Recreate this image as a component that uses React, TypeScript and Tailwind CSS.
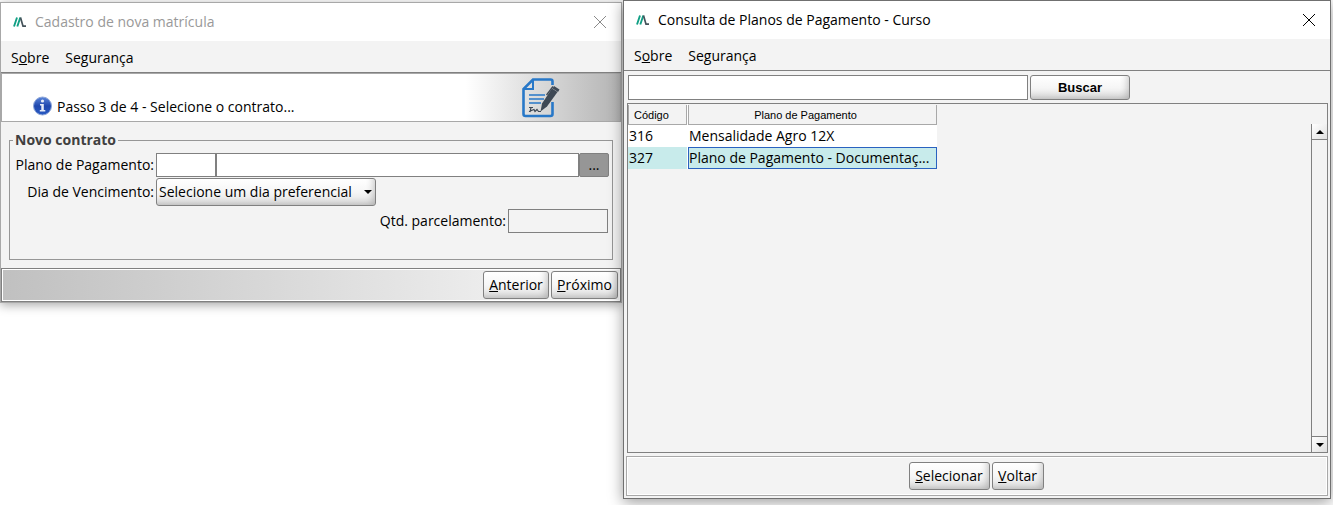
import { useState, type ReactNode } from "react";

interface IPropsWindow {
  title: string;
  active?: boolean;
  className?: string;
  children: ReactNode;
}

const buttonStyle =
  "h-7 rounded-[3px] border border-[#808080] bg-linear-to-b from-white via-[#f6f6f6] to-[#e0e0e0] text-sm text-black shadow-[inset_-5px_-4px_7px_-3px_rgba(0,0,0,0.2)]";

const plans = [
  { code: "316", name: "Mensalidade Agro 12X" },
  { code: "327", name: "Plano de Pagamento - Documentaç..." },
];

function Logo() {
  return (
    <svg className="h-3 w-3.5" viewBox="0 0 14 12" fill="none" aria-hidden="true">
      <path d="M1 10.5 4 1.5M4.3 10.5 7.3 1.5" stroke="#12a085" strokeWidth="1.9" />
      <path d="M7.5 1.5 10 10.2H13" stroke="#44525a" strokeWidth="1.7" />
    </svg>
  );
}

function CloseIcon() {
  return (
    <svg className="h-3 w-3" viewBox="0 0 12 12" fill="none" stroke="currentColor" aria-hidden="true">
      <path d="M0 0 12 12M12 0 0 12" />
    </svg>
  );
}

function InfoIcon() {
  return (
    <svg className="h-5 w-5 shrink-0" viewBox="0 0 20 20" aria-hidden="true">
      <defs>
        <linearGradient id="info" x1="0" y1="0" x2="0" y2="1">
          <stop offset="0" stopColor="#5c86da" />
          <stop offset="0.5" stopColor="#1f47ad" />
          <stop offset="1" stopColor="#2a5bc4" />
        </linearGradient>
      </defs>
      <circle cx="9.5" cy="10" r="9" fill="url(#info)" stroke="#8ea6d8" />
      <circle cx="9.5" cy="5" r="1.6" fill="#e6ecf8" />
      <path d="M7 8H10.8V14H12.3V15.5H6.800V14H8.300V9.400H7Z" fill="#e6ecf8" />
    </svg>
  );
}

function ContractIcon() {
  return (
    <svg className="h-10 w-10 shrink-0" viewBox="0 0 40 40" fill="none" aria-hidden="true">
      <path
        d="M31.5 7V3.5Q31.5 1.5 29.5 1.5H12L2.500 11V36Q2.500 38 4.500 38H29.500Q31.500 38 31.500 36V24"
        stroke="#2878c8"
        strokeWidth="2.6"
      />
      <path d="M12 2V11H3" stroke="#2878c8" strokeWidth="2" />
      <path d="M8 17H24M8 21H23M8 25H20" stroke="#2878c8" strokeWidth="1.6" />
      <path
        d="M8 29.500H12M10 29.500 9 34M8 33.500 13 31.500 14 33.500 16 31.500 17.500 33.500H20"
        stroke="#3f4955"
        strokeWidth="1.2"
      />
      <path d="M31 10.500 36.500 14 26 28.500 19.500 33.500 21 25.500Z" fill="#3f4955" />
      <path d="M33 8 38.500 11.500 37 14 31.500 10.500Z" fill="#3f4955" />
      <path d="M32 8.500 25.500 17" stroke="#3f4955" strokeWidth="1.3" />
    </svg>
  );
}

function Triangle({ up }: { up?: boolean }) {
  return (
    <svg className="h-1.5 w-2.5" viewBox="0 0 10 6" fill="#000" aria-hidden="true">
      <path d={up ? "M1 5 5 1 9 5Z" : "M1 1H9L5 5Z"} />
    </svg>
  );
}

function Window({ title, active, className, children }: IPropsWindow) {
  return (
    <section
      className={`flex min-w-0 flex-col border bg-[#f3f3f3] ${
        active
          ? "border-[#707070] shadow-[0_3px_14px_rgba(0,0,0,0.4)]"
          : "border-[#a8a8a8] shadow-[0_2px_10px_rgba(0,0,0,0.35)]"
      } ${className ?? ""}`}
    >
      <header className="flex h-[38px] items-center bg-white pr-[15px] pl-3">
        <Logo />
        <h1 className={`ml-2 flex-1 text-sm ${active ? "text-black" : "text-[#999999]"}`}>{title}</h1>
        <button aria-label="Fechar" className={active ? "text-black" : "text-[#8a8a8a]"}>
          <CloseIcon />
        </button>
      </header>
      <nav className="flex h-8 items-center gap-4 border-b border-[#808080] px-2.5 pt-0.5 text-sm">
        <button>
          S<u>o</u>bre
        </button>
        <button>Segurança</button>
      </nav>
      {children}
    </section>
  );
}

function RegistrationWindow() {
  return (
    <Window title="Cadastro de nova matrícula" className="mt-0.5 self-start">
      <div className="flex h-[49px] items-center justify-between border border-[#a8a8a8] bg-linear-to-r from-white from-75% to-[#b4b4b4] pr-[59px] pl-[31px]">
        <div className="flex items-center gap-1 pt-4">
          <InfoIcon />
          <p className="pt-0.5 text-sm">Passo 3 de 4 - Selecione o contrato...</p>
        </div>
        <ContractIcon />
      </div>
      <form onSubmit={(e) => e.preventDefault()}>
        <fieldset className="mx-2 my-2 h-[130px] border border-[#969696] px-[3px]">
          <legend className="px-0.5 text-sm leading-5 font-bold text-[#404040]">Novo contrato</legend>
          <div className="mt-[3px] flex items-center">
            <label htmlFor="plan" className="w-[143px] shrink-0 pr-0.5 text-right text-sm whitespace-nowrap">
              Plano de Pagamento:
            </label>
            <input id="plan" className="h-6 w-15 border border-[#808080] bg-white px-1 text-sm" />
            <input
              aria-label="Descrição do plano"
              className="h-6 min-w-0 flex-1 border border-[#808080] bg-white px-1 text-sm"
            />
            <button className="h-6 w-[30px] rounded-[2px] border border-[#808080] bg-[#969696] text-sm leading-5">
              ...
            </button>
          </div>
          <div className="mt-px flex items-center">
            <label htmlFor="day" className="w-[143px] shrink-0 pr-0.5 text-right text-sm whitespace-nowrap">
              Dia de Vencimento:
            </label>
            <div className="relative">
              <select id="day" className={`${buttonStyle} w-[220px] appearance-none pl-0.5`}>
                <option>Selecione um dia preferencial</option>
              </select>
              <span className="pointer-events-none absolute inset-y-0 right-[3px] flex items-center">
                <Triangle />
              </span>
            </div>
          </div>
          <div className="mt-[3px] flex items-center justify-end pr-px">
            <label htmlFor="installments" className="pr-0.5 text-sm">
              Qtd. parcelamento:
            </label>
            <input id="installments" readOnly className="h-6 w-[100px] border border-[#808080] px-1 text-sm" />
          </div>
        </fieldset>
      </form>
      <footer className="flex h-[34px] items-center justify-end gap-0.5 border border-[#808080] bg-linear-to-r from-[#c0c0c0] to-[#f3f3f3] to-90% pr-0.5 inset-ring inset-ring-white">
        <button className={`${buttonStyle} w-[66px]`}>
          <u>A</u>nterior
        </button>
        <button className={`${buttonStyle} w-[67px]`}>
          <u>P</u>róximo
        </button>
      </footer>
    </Window>
  );
}

function PlansWindow() {
  const [selected, setSelected] = useState("327");
  const [search, setSearch] = useState("");

  return (
    <Window title="Consulta de Planos de Pagamento - Curso" active className="z-10">
      <form className="mt-1 flex gap-0.5 px-1" onSubmit={(e) => e.preventDefault()}>
        <input
          aria-label="Buscar plano"
          value={search}
          onChange={(e) => setSearch(e.target.value)}
          className="h-[25px] w-[400px] border border-[#808080] bg-white px-1 text-sm"
        />
        <button className="h-[25px] w-[100px] rounded-[3px] border border-[#808080] bg-linear-to-b from-white via-[#f6f6f6] to-[#e0e0e0] font-['Liberation_Sans',sans-serif] text-[13px] font-bold shadow-[inset_-5px_-4px_7px_-3px_rgba(0,0,0,0.2)]">
          Buscar
        </button>
      </form>
      <div className="mr-0.5 ml-[3px] mt-[3px] flex flex-1 justify-between border border-[#808080]">
        <table className="table-fixed border-separate border-spacing-0 self-start text-sm">
          <thead className="font-['Liberation_Sans',sans-serif] text-[11px]">
            <tr className="h-[21px]">
              <th className="w-[60px] border-r border-white p-0 font-normal">
                <div className="h-5 border border-t-0 border-[#a8a8a8] px-[5px] text-left leading-5">Código</div>
              </th>
              <th className="w-[249px] p-0 font-normal">
                <div className="h-5 border border-t-0 border-[#a8a8a8] pr-3.5 leading-5">Plano de Pagamento</div>
              </th>
            </tr>
          </thead>
          <tbody>
            {plans.map((plan) => (
              <tr
                key={plan.code}
                onClick={() => setSelected(plan.code)}
                className={`h-[22px] ${selected === plan.code ? "bg-[#c8ebeb]" : "bg-white"}`}
              >
                <td className="border-r border-white p-0 pl-px leading-5">{plan.code}</td>
                <td
                  className={`border p-0 leading-5 whitespace-nowrap ${
                    selected === plan.code ? "border-[#2a62c0]" : "border-transparent"
                  }`}
                >
                  {plan.name}
                </td>
              </tr>
            ))}
          </tbody>
        </table>
        <div className="mt-5 flex w-4 flex-col justify-between border-l border-[#808080]">
          <button
            aria-label="Rolar para cima"
            className="flex h-4 items-center justify-center border-b border-[#808080] bg-linear-to-br from-white to-[#e0e0e0]"
          >
            <Triangle up />
          </button>
          <button
            aria-label="Rolar para baixo"
            className="flex h-4 items-center justify-center border-t border-[#808080] bg-linear-to-br from-white to-[#e0e0e0]"
          >
            <Triangle />
          </button>
        </div>
      </div>
      <footer className="mx-0.5 mt-[3px] mb-0.5 flex h-10 items-center justify-center gap-0.5 border border-[#a8a8a8] pr-0.5 inset-ring inset-ring-white">
        <button className={`${buttonStyle} w-[81px]`}>
          <u>S</u>elecionar
        </button>
        <button className={`${buttonStyle} w-[52px]`}>
          <u>V</u>oltar
        </button>
      </footer>
    </Window>
  );
}

export default function App() {
  return (
    <main className="grid min-h-screen grid-cols-[622fr_708fr] gap-px overflow-hidden bg-white pr-0.5 pb-1.5 font-['Open_Sans','Noto_Sans',sans-serif] text-black">
      <RegistrationWindow />
      <PlansWindow />
    </main>
  );
}
